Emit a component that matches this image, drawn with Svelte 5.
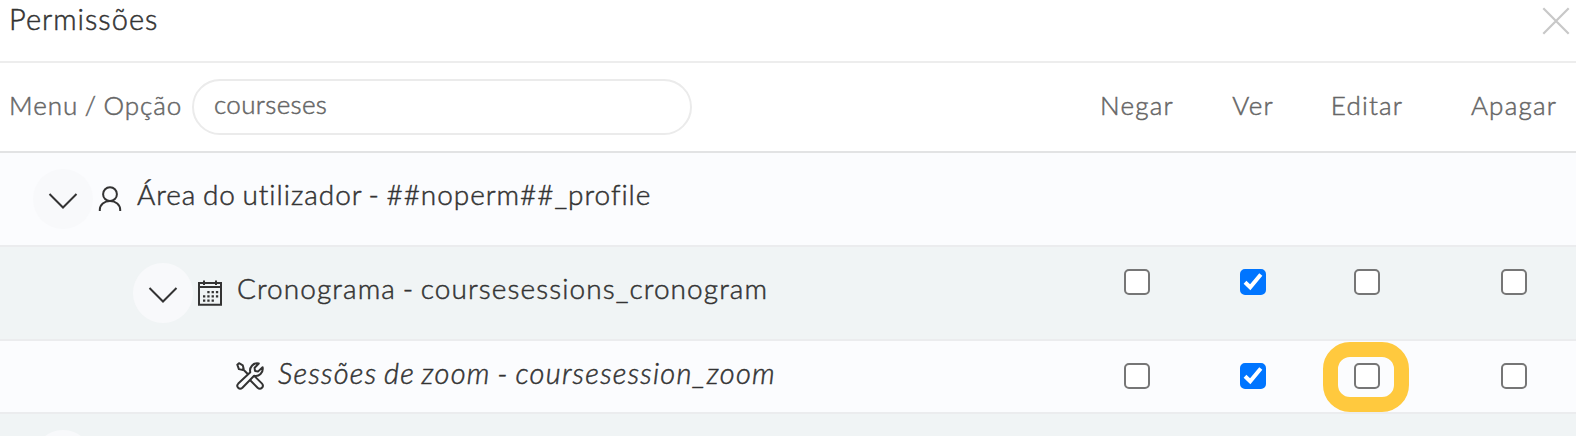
<script lang="ts">
  type Permission = 'negar' | 'ver' | 'editar' | 'apagar';

  interface PermissionRow {
    id: string;
    label: string;
    level: number;
    icon: 'user' | 'calendar' | 'tools' | null;
    expandable: boolean;
    checks: Record<Permission, boolean> | null;
    highlight?: Permission;
  }

  const columns: { key: Permission; label: string }[] = [
    { key: 'negar', label: 'Negar' },
    { key: 'ver', label: 'Ver' },
    { key: 'editar', label: 'Editar' },
    { key: 'apagar', label: 'Apagar' },
  ];

  let search = $state('courseses');

  let rows = $state<PermissionRow[]>([
    {
      id: 'profile',
      label: 'Área do utilizador - ##noperm##_profile',
      level: 0,
      icon: 'user',
      expandable: true,
      checks: null,
    },
    {
      id: 'cronogram',
      label: 'Cronograma - coursesessions_cronogram',
      level: 1,
      icon: 'calendar',
      expandable: true,
      checks: { negar: false, ver: true, editar: false, apagar: false },
    },
    {
      id: 'zoom',
      label: 'Sessões de zoom - coursesession_zoom',
      level: 2,
      icon: 'tools',
      expandable: false,
      checks: { negar: false, ver: true, editar: false, apagar: false },
      highlight: 'editar',
    },
    { id: 'next', label: '', level: 0, icon: null, expandable: true, checks: null },
  ]);
</script>

<div class="modal">
  <header class="modal-header">
    <h2>Permissões</h2>
    <button class="close" type="button" aria-label="Fechar">
      <svg width="28" height="28" viewBox="0 0 28 28">
        <path d="M1.3 1.3 26.7 26.7M26.7 1.3 1.3 26.7" />
      </svg>
    </button>
  </header>

  <div class="grid-row head">
    <div class="search">
      <label for="search">Menu / Opção</label>
      <input id="search" type="text" bind:value={search} />
    </div>
    {#each columns as col}
      <div class="cell">{col.label}</div>
    {/each}
  </div>

  {#each rows as row (row.id)}
    <div class="grid-row item level-{row.level}">
      <div class="name">
        {#if row.expandable}
          <button class="toggle" type="button" aria-label="Expandir">
            <svg width="30" height="18" viewBox="0 0 30 18">
              <path d="M1.5 2 15 15.5 28.5 2" />
            </svg>
          </button>
        {/if}
        {#if row.icon === 'user'}
          <svg class="icon user" width="24" height="26" viewBox="0 0 24 26">
            <circle cx="12" cy="8.2" r="6.9" />
            <path d="M1.8 25v-1.2C1.8 18.5 6.3 15 12 15s10.2 3.5 10.2 8.8V25" />
          </svg>
        {:else if row.icon === 'calendar'}
          <svg class="icon calendar" width="24" height="26" viewBox="0 0 24 26">
            <path d="M1 3h22v21.8H1zM1 7h22M6 .5V5M18 .5V5" />
            <path class="dots" d="M9.3 12.2h11M5 16.4h15.5M5 20.6h11.2" />
          </svg>
        {:else if row.icon === 'tools'}
          <svg class="icon tools" width="28" height="28" viewBox="0 0 28 28">
            <path d="M1.3 2.7 3 1.2l3.8 2.2.8 3.2-1.4 1.3-3.3-.8zM7 7.2l5 5" />
            <path d="M14.3 10.3c-1.2-4.6 2.7-10 8.5-8.8l-4.2 4.3.4 3.2 3.2.4 4.4-4.2c1 5.7-3.700 9.800-8.500 8.600L6.400 25.700c-3 2.800-6.900-1.100-4.100-4.100z" />
            <path d="m18.2 13.9 7.6 7.5c2.9 3.1-1.1 7.2-4.2 4.3l-7.4-7.5" />
          </svg>
        {/if}
        <span class="label">{row.label}</span>
      </div>
      {#if row.checks}
        {#each columns as col}
          <div class="cell">
            <label class="check" class:highlight={row.highlight === col.key}>
              <input type="checkbox" aria-label={col.label} bind:checked={row.checks[col.key]} />
              <svg width="26" height="26" viewBox="0 0 26 26">
                <path d="M5 13.3 10.2 18.3 20.8 5.4" />
              </svg>
            </label>
          </div>
        {/each}
      {/if}
    </div>
  {/each}
</div>

<style>
  :global(body) {
    overflow: hidden;
    background: #fff;
  }
  .modal {
    height: 436px;
    overflow: hidden;
    color: #333;
    font-family: Lato, 'Open Sans', sans-serif;
    font-weight: 300;
    -webkit-text-stroke: 0.5px currentColor;
  }
  .modal-header {
    display: flex;
    justify-content: space-between;
    align-items: flex-start;
    box-sizing: border-box;
    height: 63px;
    padding: 0 6px 0 9px;
    border-bottom: 2px solid #ededed;
  }
  h2 {
    margin: 0;
    font-size: 29px;
    font-weight: 300;
    line-height: 38px;
    letter-spacing: 1px;
  }
  button {
    padding: 0;
    border: none;
    cursor: pointer;
  }
  svg {
    display: block;
    fill: none;
  }
  .close {
    margin-top: 7px;
    background: none;
  }
  .close path {
    stroke: #c8c8c8;
    stroke-width: 2.2;
  }
  .grid-row {
    display: grid;
    grid-template-columns: 1fr 116px 116px 112px 153px;
    box-sizing: border-box;
  }
  .cell {
    display: flex;
    justify-content: center;
  }
  .cell:last-child {
    padding-left: 29px;
  }
  .head {
    height: 90px;
    padding-top: 16px;
    border-bottom: 2px solid #e2e3e4;
    color: #666;
    font-size: 26px;
    line-height: 53px;
    letter-spacing: 1.2px;
  }
  .search {
    display: flex;
    padding-left: 9px;
  }
  .search label {
    width: 183px;
    white-space: nowrap;
    letter-spacing: 0.95px;
    word-spacing: -1.5px;
  }
  .search input {
    box-sizing: border-box;
    width: 500px;
    height: 56px;
    padding: 0 20px 6px;
    border: 2px solid #ebebeb;
    border-radius: 28px;
    outline: none;
    background: #fff;
    color: #666;
    font: inherit;
    letter-spacing: 0.35px;
    -webkit-text-stroke: inherit;
  }
  .item {
    height: 94px;
    border-bottom: 2px solid #ebecee;
    background: #f0f4f5;
  }
  .item.level-2 {
    height: 73px;
  }
  .item:nth-child(odd) {
    background: #fbfcfe;
  }
  .name {
    display: flex;
    padding: 16px 0 0 33px;
    white-space: nowrap;
  }
  .level-1 .name {
    padding-left: 133px;
  }
  .level-2 .name {
    padding: 6px 0 0 236px;
  }
  .toggle {
    display: grid;
    place-items: center;
    width: 60px;
    height: 60px;
    border-radius: 50%;
    background: #f8f9fb;
  }
  .toggle path,
  .icon {
    stroke: #333;
    stroke-width: 2;
  }
  .toggle svg {
    margin-top: 4px;
  }
  .icon {
    margin: 17px 15px 0 5px;
  }
  .icon.tools {
    margin: 15px 14px 0 0;
    stroke-linejoin: round;
  }
  .dots {
    stroke-width: 2.3;
    stroke-dasharray: 2.3 2;
  }
  .label {
    font-size: 28px;
    line-height: 51px;
    letter-spacing: 0.96px;
    word-spacing: -2px;
  }
  .level-1 .label {
    letter-spacing: 1.09px;
  }
  .level-2 .label {
    font-size: 29px;
    font-style: italic;
    letter-spacing: 1.26px;
  }
  .item .cell {
    padding-top: 22px;
  }
  .check {
    position: relative;
    width: 26px;
    height: 26px;
  }
  .check input {
    appearance: none;
    display: block;
    box-sizing: border-box;
    width: 26px;
    height: 26px;
    margin: 0;
    border: 2px solid #767676;
    border-radius: 5px;
    background: #fff;
  }
  .check input:checked {
    border-color: #0075ff;
    background: #0075ff;
  }
  /* tick sits over the native box */
  .check svg {
    position: absolute;
    inset: 0;
    visibility: hidden;
    pointer-events: none;
  }
  .check input:checked + svg {
    visibility: visible;
  }
  .check path {
    stroke: #fff;
    stroke-width: 4;
  }
  .highlight::after {
    content: '';
    position: absolute;
    top: -21px;
    left: -31px;
    box-sizing: border-box;
    width: 86px;
    height: 70px;
    border: 15px solid #ffc93e;
    border-radius: 27px;
    pointer-events: none;
  }
</style>
